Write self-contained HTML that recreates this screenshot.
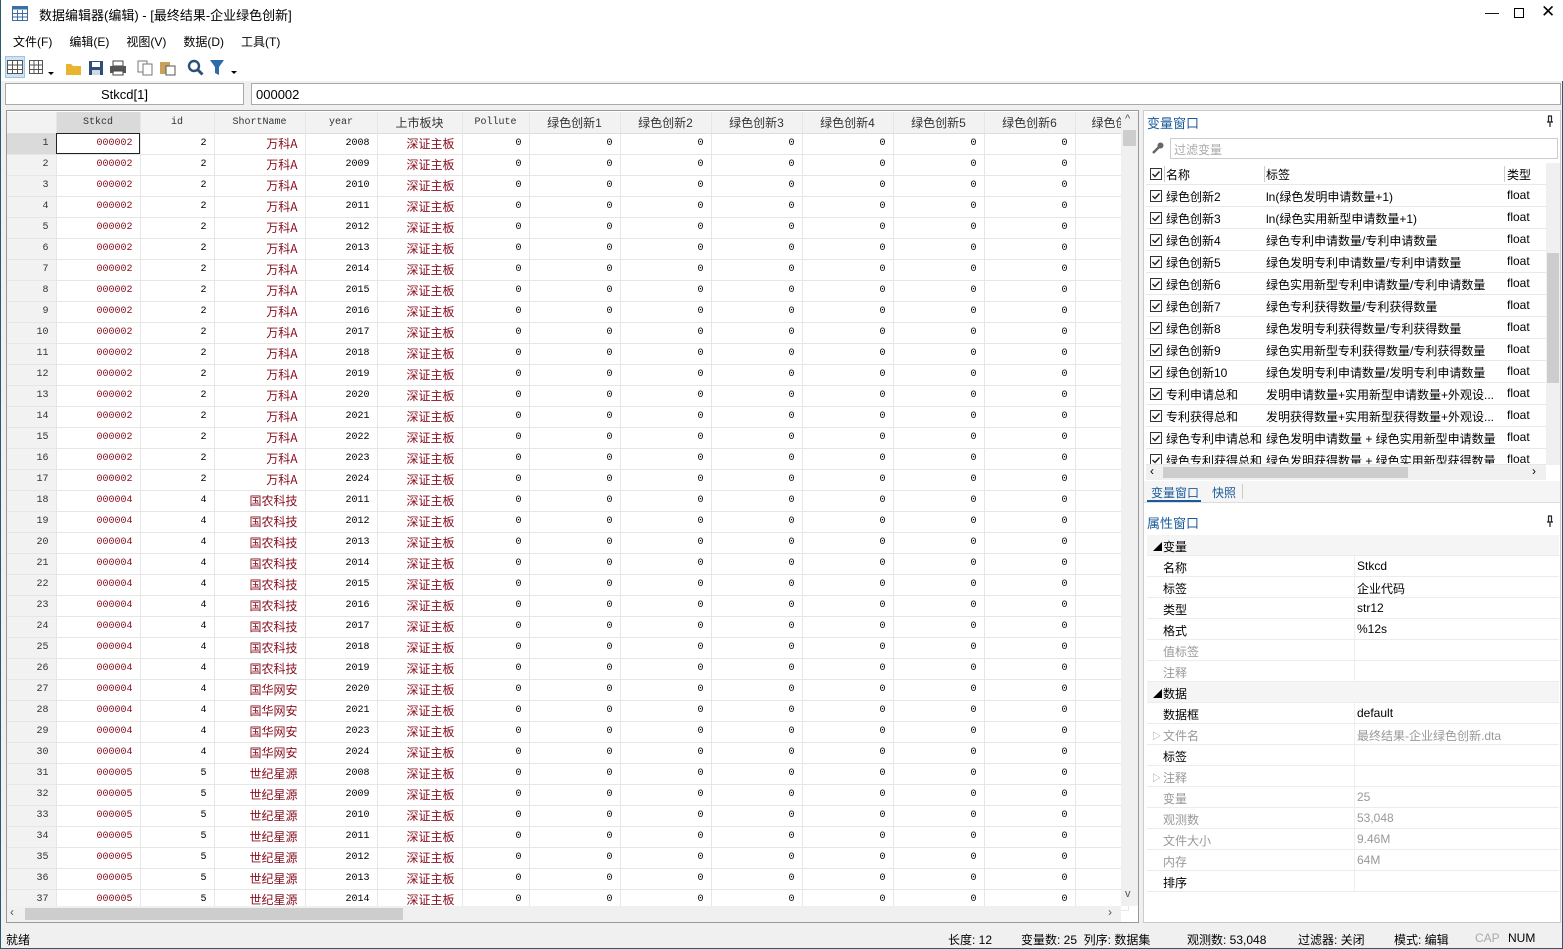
<!DOCTYPE html>
<html><head><meta charset="utf-8"><style>
*{box-sizing:border-box;margin:0;padding:0}
body{width:1563px;height:949px;position:relative;overflow:hidden;background:#f0f0f0;font-family:"Liberation Sans","Noto Sans CJK SC",sans-serif;font-size:12px;color:#000;border-left:1px solid #2b5a6e;border-right:1px solid #2b5a6e;border-bottom:1px solid #2b5a6e}
.a{position:absolute;white-space:nowrap}
#title{left:0;top:0;width:1563px;height:28px;background:#fff}
#menu{left:0;top:28px;width:1563px;height:26px;background:#fff}
#menu span{margin-right:17px}
#tb{left:0;top:54px;width:1563px;height:27px;background:#fff}
.grid{position:absolute;left:6px;top:112px;border-collapse:collapse;table-layout:fixed;background:#fff;font-family:"Liberation Mono","Noto Sans CJK SC",monospace;font-size:10px}
.grid td,.grid th{height:21px;border-right:1px solid #e6e6e6;border-bottom:1px solid #e6e6e6;text-align:right;padding-right:7px;overflow:hidden;white-space:nowrap;font-weight:normal;vertical-align:middle}
.grid th{background:#f2f2f2;color:#333}
.grid tr.h th{text-align:center;padding:0;background:#f2f2f2;border-bottom:1px solid #ddd;font-size:10px}
.grid tr.h th.cj{font-family:"Liberation Sans","Noto Sans CJK SC",sans-serif;font-size:12px}
.grid tr.h th.sel{background:#dadada}
.grid .s{color:#8a1020}
.grid .c{color:#8a1020;font-family:"Noto Sans CJK SC",sans-serif;font-size:12px}
.grid td.b{outline:1px solid #222;outline-offset:-1px}
.rp{font-size:12px}
.vr{position:absolute;left:1145px;width:400px;height:22px;border-bottom:1px solid #e8e8e8;background:#fff}
.vr span{position:absolute;top:3px}
.vr svg{position:absolute;left:4px;top:5px}
.pr{position:absolute;left:1146px;width:412px;height:21px;border-bottom:1px solid #ececec;background:#fff}
.pr span{position:absolute;top:3px}
.pr .k{left:16px}.pr .v{left:210px}
.g{color:#999}
</style></head><body>
<svg width="0" height="0" style="position:absolute"><defs><symbol id="ck" viewBox="0 0 12 12"><rect x=".5" y=".5" width="11" height="11" fill="#fff" stroke="#333"/><path d="M2.5 6l2.5 2.5 4.5-5" fill="none" stroke="#222" stroke-width="1.4"/></symbol><symbol id="pin" viewBox="0 0 8 12"><path d="M2 1h4M2.5 1v6M5.5 1v6M1 7h6M4 7v5" stroke="#222" stroke-width="1.2" fill="none"/></symbol></defs></svg>
<div class="a" id="title">
<svg class="a" style="left:11px;top:6px" width="16" height="15"><rect x=".5" y=".5" width="15" height="14" fill="#fff" stroke="#3a6ea5"/><rect x=".5" y=".5" width="15" height="3" fill="#3a6ea5"/><path d="M5.5 4v10M10.5 4v10M1 7.5h14M1 11h14" stroke="#3a6ea5"/></svg>
<span class="a" style="left:38px;top:5px;font-size:13px">数据编辑器(编辑) - [最终结果-企业绿色创新]</span>
<span class="a" style="left:1484px;top:4px;font-size:14px">—</span>
<svg class="a" style="left:1513px;top:8px" width="10" height="10"><rect x=".5" y=".5" width="9" height="9" fill="none" stroke="#000"/></svg>
<span class="a" style="left:1540px;top:2px;font-size:17px">✕</span>
</div>
<div class="a" id="menu"><div class="a" style="left:12px;top:5px"><span>文件(F)</span><span>编辑(E)</span><span>视图(V)</span><span>数据(D)</span><span>工具(T)</span></div></div>
<div class="a" id="tb">
<div class="a" style="left:4px;top:2px;width:20px;height:22px;background:#cfe3f5;border:1px solid #9ec3e6"></div>
<svg class="a" style="left:6px;top:6px" width="16" height="14"><rect x=".5" y=".5" width="15" height="13" fill="#fff" stroke="#555"/><path d="M5.5 1v13M10.5 1v13M1 5h15M1 9.5h15" stroke="#555"/></svg>
<svg class="a" style="left:28px;top:6px" width="26" height="16"><rect x=".5" y=".5" width="13" height="13" fill="#fff" stroke="#555"/><path d="M5 1v13M9.5 1v13M1 5h13M1 9.5h13" stroke="#555"/><path d="M19 12l3 3 3-3z" fill="#000"/></svg>
<svg class="a" style="left:64px;top:7px" width="17" height="14"><path d="M1 3h5l2 2h8v9H1z" fill="#e8b530"/></svg>
<svg class="a" style="left:87px;top:6px" width="16" height="16"><rect x="1" y="1" width="14" height="14" fill="#2d4f7a"/><rect x="4" y="2" width="8" height="5" fill="#fff"/><rect x="4" y="10" width="8" height="5" fill="#cfd9e6"/></svg>
<svg class="a" style="left:108px;top:6px" width="18" height="16"><rect x="4" y="1" width="10" height="5" fill="#fff" stroke="#444"/><rect x="1" y="6" width="16" height="7" fill="#555"/><rect x="4" y="11" width="10" height="4" fill="#fff" stroke="#444"/></svg>
<svg class="a" style="left:136px;top:6px" width="17" height="16"><rect x="1" y="1" width="9" height="11" fill="#fff" stroke="#777"/><rect x="6" y="4" width="9" height="11" fill="#fff" stroke="#777"/></svg>
<svg class="a" style="left:158px;top:5px" width="18" height="17"><rect x="1" y="3" width="10" height="12" fill="#c9a15b"/><rect x="7" y="7" width="9" height="9" fill="#fff" stroke="#555"/></svg>
<svg class="a" style="left:186px;top:5px" width="18" height="18"><circle cx="7" cy="7" r="5" fill="none" stroke="#2d4f7a" stroke-width="2.4"/><path d="M10.5 10.5l5 5" stroke="#2d4f7a" stroke-width="3"/></svg>
<svg class="a" style="left:208px;top:5px" width="32" height="18"><path d="M1 1h14l-5 7v8l-4-2V8z" fill="#2d6aa8"/><path d="M22 12l3 3 3-3z" fill="#000"/></svg>
</div>
<div class="a" style="left:4px;top:83px;width:239px;height:22px;background:#fff;border:1px solid #aaa;text-align:center;padding-top:3px;font-size:13px">Stkcd[1]</div>
<div class="a" style="left:250px;top:83px;width:1310px;height:22px;background:#fff;border:1px solid #aaa;padding:3px 4px;font-size:13px">000002</div>
<div class="a" style="left:5px;top:110px;width:1133px;height:813px;border:1px solid #999;background:#fff"></div>
<table class="grid">
<colgroup><col style="width:49px"><col style="width:84px"><col style="width:74px"><col style="width:91px"><col style="width:72px"><col style="width:85px"><col style="width:67px"><col style="width:91px"><col style="width:91px"><col style="width:91px"><col style="width:91px"><col style="width:91px"><col style="width:91px"><col style="width:46px"></colgroup>
<tr class="h"><th></th><th class="sel">Stkcd</th><th>id</th><th>ShortName</th><th>year</th><th class="cj">上市板块</th><th>Pollute</th><th class="cj">绿色创新1</th><th class="cj">绿色创新2</th><th class="cj">绿色创新3</th><th class="cj">绿色创新4</th><th class="cj">绿色创新5</th><th class="cj">绿色创新6</th><th class="cj" style="text-align:left;padding-left:16px">绿色创</th></tr>
<tr><th style="background:#dadada">1</th><td class="s b">000002</td><td>2</td><td class="c">万科A</td><td>2008</td><td class="c">深证主板</td><td>0</td><td>0</td><td>0</td><td>0</td><td>0</td><td>0</td><td>0</td><td></td></tr>
<tr><th>2</th><td class="s">000002</td><td>2</td><td class="c">万科A</td><td>2009</td><td class="c">深证主板</td><td>0</td><td>0</td><td>0</td><td>0</td><td>0</td><td>0</td><td>0</td><td></td></tr>
<tr><th>3</th><td class="s">000002</td><td>2</td><td class="c">万科A</td><td>2010</td><td class="c">深证主板</td><td>0</td><td>0</td><td>0</td><td>0</td><td>0</td><td>0</td><td>0</td><td></td></tr>
<tr><th>4</th><td class="s">000002</td><td>2</td><td class="c">万科A</td><td>2011</td><td class="c">深证主板</td><td>0</td><td>0</td><td>0</td><td>0</td><td>0</td><td>0</td><td>0</td><td></td></tr>
<tr><th>5</th><td class="s">000002</td><td>2</td><td class="c">万科A</td><td>2012</td><td class="c">深证主板</td><td>0</td><td>0</td><td>0</td><td>0</td><td>0</td><td>0</td><td>0</td><td></td></tr>
<tr><th>6</th><td class="s">000002</td><td>2</td><td class="c">万科A</td><td>2013</td><td class="c">深证主板</td><td>0</td><td>0</td><td>0</td><td>0</td><td>0</td><td>0</td><td>0</td><td></td></tr>
<tr><th>7</th><td class="s">000002</td><td>2</td><td class="c">万科A</td><td>2014</td><td class="c">深证主板</td><td>0</td><td>0</td><td>0</td><td>0</td><td>0</td><td>0</td><td>0</td><td></td></tr>
<tr><th>8</th><td class="s">000002</td><td>2</td><td class="c">万科A</td><td>2015</td><td class="c">深证主板</td><td>0</td><td>0</td><td>0</td><td>0</td><td>0</td><td>0</td><td>0</td><td></td></tr>
<tr><th>9</th><td class="s">000002</td><td>2</td><td class="c">万科A</td><td>2016</td><td class="c">深证主板</td><td>0</td><td>0</td><td>0</td><td>0</td><td>0</td><td>0</td><td>0</td><td></td></tr>
<tr><th>10</th><td class="s">000002</td><td>2</td><td class="c">万科A</td><td>2017</td><td class="c">深证主板</td><td>0</td><td>0</td><td>0</td><td>0</td><td>0</td><td>0</td><td>0</td><td></td></tr>
<tr><th>11</th><td class="s">000002</td><td>2</td><td class="c">万科A</td><td>2018</td><td class="c">深证主板</td><td>0</td><td>0</td><td>0</td><td>0</td><td>0</td><td>0</td><td>0</td><td></td></tr>
<tr><th>12</th><td class="s">000002</td><td>2</td><td class="c">万科A</td><td>2019</td><td class="c">深证主板</td><td>0</td><td>0</td><td>0</td><td>0</td><td>0</td><td>0</td><td>0</td><td></td></tr>
<tr><th>13</th><td class="s">000002</td><td>2</td><td class="c">万科A</td><td>2020</td><td class="c">深证主板</td><td>0</td><td>0</td><td>0</td><td>0</td><td>0</td><td>0</td><td>0</td><td></td></tr>
<tr><th>14</th><td class="s">000002</td><td>2</td><td class="c">万科A</td><td>2021</td><td class="c">深证主板</td><td>0</td><td>0</td><td>0</td><td>0</td><td>0</td><td>0</td><td>0</td><td></td></tr>
<tr><th>15</th><td class="s">000002</td><td>2</td><td class="c">万科A</td><td>2022</td><td class="c">深证主板</td><td>0</td><td>0</td><td>0</td><td>0</td><td>0</td><td>0</td><td>0</td><td></td></tr>
<tr><th>16</th><td class="s">000002</td><td>2</td><td class="c">万科A</td><td>2023</td><td class="c">深证主板</td><td>0</td><td>0</td><td>0</td><td>0</td><td>0</td><td>0</td><td>0</td><td></td></tr>
<tr><th>17</th><td class="s">000002</td><td>2</td><td class="c">万科A</td><td>2024</td><td class="c">深证主板</td><td>0</td><td>0</td><td>0</td><td>0</td><td>0</td><td>0</td><td>0</td><td></td></tr>
<tr><th>18</th><td class="s">000004</td><td>4</td><td class="c">国农科技</td><td>2011</td><td class="c">深证主板</td><td>0</td><td>0</td><td>0</td><td>0</td><td>0</td><td>0</td><td>0</td><td></td></tr>
<tr><th>19</th><td class="s">000004</td><td>4</td><td class="c">国农科技</td><td>2012</td><td class="c">深证主板</td><td>0</td><td>0</td><td>0</td><td>0</td><td>0</td><td>0</td><td>0</td><td></td></tr>
<tr><th>20</th><td class="s">000004</td><td>4</td><td class="c">国农科技</td><td>2013</td><td class="c">深证主板</td><td>0</td><td>0</td><td>0</td><td>0</td><td>0</td><td>0</td><td>0</td><td></td></tr>
<tr><th>21</th><td class="s">000004</td><td>4</td><td class="c">国农科技</td><td>2014</td><td class="c">深证主板</td><td>0</td><td>0</td><td>0</td><td>0</td><td>0</td><td>0</td><td>0</td><td></td></tr>
<tr><th>22</th><td class="s">000004</td><td>4</td><td class="c">国农科技</td><td>2015</td><td class="c">深证主板</td><td>0</td><td>0</td><td>0</td><td>0</td><td>0</td><td>0</td><td>0</td><td></td></tr>
<tr><th>23</th><td class="s">000004</td><td>4</td><td class="c">国农科技</td><td>2016</td><td class="c">深证主板</td><td>0</td><td>0</td><td>0</td><td>0</td><td>0</td><td>0</td><td>0</td><td></td></tr>
<tr><th>24</th><td class="s">000004</td><td>4</td><td class="c">国农科技</td><td>2017</td><td class="c">深证主板</td><td>0</td><td>0</td><td>0</td><td>0</td><td>0</td><td>0</td><td>0</td><td></td></tr>
<tr><th>25</th><td class="s">000004</td><td>4</td><td class="c">国农科技</td><td>2018</td><td class="c">深证主板</td><td>0</td><td>0</td><td>0</td><td>0</td><td>0</td><td>0</td><td>0</td><td></td></tr>
<tr><th>26</th><td class="s">000004</td><td>4</td><td class="c">国农科技</td><td>2019</td><td class="c">深证主板</td><td>0</td><td>0</td><td>0</td><td>0</td><td>0</td><td>0</td><td>0</td><td></td></tr>
<tr><th>27</th><td class="s">000004</td><td>4</td><td class="c">国华网安</td><td>2020</td><td class="c">深证主板</td><td>0</td><td>0</td><td>0</td><td>0</td><td>0</td><td>0</td><td>0</td><td></td></tr>
<tr><th>28</th><td class="s">000004</td><td>4</td><td class="c">国华网安</td><td>2021</td><td class="c">深证主板</td><td>0</td><td>0</td><td>0</td><td>0</td><td>0</td><td>0</td><td>0</td><td></td></tr>
<tr><th>29</th><td class="s">000004</td><td>4</td><td class="c">国华网安</td><td>2023</td><td class="c">深证主板</td><td>0</td><td>0</td><td>0</td><td>0</td><td>0</td><td>0</td><td>0</td><td></td></tr>
<tr><th>30</th><td class="s">000004</td><td>4</td><td class="c">国华网安</td><td>2024</td><td class="c">深证主板</td><td>0</td><td>0</td><td>0</td><td>0</td><td>0</td><td>0</td><td>0</td><td></td></tr>
<tr><th>31</th><td class="s">000005</td><td>5</td><td class="c">世纪星源</td><td>2008</td><td class="c">深证主板</td><td>0</td><td>0</td><td>0</td><td>0</td><td>0</td><td>0</td><td>0</td><td></td></tr>
<tr><th>32</th><td class="s">000005</td><td>5</td><td class="c">世纪星源</td><td>2009</td><td class="c">深证主板</td><td>0</td><td>0</td><td>0</td><td>0</td><td>0</td><td>0</td><td>0</td><td></td></tr>
<tr><th>33</th><td class="s">000005</td><td>5</td><td class="c">世纪星源</td><td>2010</td><td class="c">深证主板</td><td>0</td><td>0</td><td>0</td><td>0</td><td>0</td><td>0</td><td>0</td><td></td></tr>
<tr><th>34</th><td class="s">000005</td><td>5</td><td class="c">世纪星源</td><td>2011</td><td class="c">深证主板</td><td>0</td><td>0</td><td>0</td><td>0</td><td>0</td><td>0</td><td>0</td><td></td></tr>
<tr><th>35</th><td class="s">000005</td><td>5</td><td class="c">世纪星源</td><td>2012</td><td class="c">深证主板</td><td>0</td><td>0</td><td>0</td><td>0</td><td>0</td><td>0</td><td>0</td><td></td></tr>
<tr><th>36</th><td class="s">000005</td><td>5</td><td class="c">世纪星源</td><td>2013</td><td class="c">深证主板</td><td>0</td><td>0</td><td>0</td><td>0</td><td>0</td><td>0</td><td>0</td><td></td></tr>
<tr><th style="height:17px">37</th><td class="s">000005</td><td>5</td><td class="c">世纪星源</td><td>2014</td><td class="c">深证主板</td><td>0</td><td>0</td><td>0</td><td>0</td><td>0</td><td>0</td><td>0</td><td></td></tr>
</table>
<div class="a" style="left:6px;top:906px;width:1114px;height:16px;background:#f0f0f0"></div>
<div class="a" style="left:24px;top:908px;width:378px;height:12px;background:#cdcdcd"></div>
<span class="a" style="left:9px;top:905px;font-size:12px;color:#555">‹</span>
<span class="a" style="left:1107px;top:905px;font-size:12px;color:#555">›</span>
<div class="a" style="left:1120px;top:112px;width:17px;height:794px;background:#f0f0f0"></div>
<div class="a" style="left:1122px;top:130px;width:13px;height:16px;background:#cdcdcd"></div>
<span class="a" style="left:1124px;top:113px;font-size:11px;color:#555">^</span>
<span class="a" style="left:1124px;top:888px;font-size:11px;color:#555">v</span>
<div class="a" style="left:1142px;top:110px;width:418px;height:813px;background:#fff;border:1px solid #ccc"></div>
<span class="a rp" style="left:1146px;top:113px;font-size:13px;color:#1a5a9a">变量窗口</span>
<svg class="a" style="left:1545px;top:115px" width="8" height="12"><use href="#pin"/></svg>
<svg class="a" style="left:1150px;top:141px" width="14" height="14"><path d="M2 12l6-6" stroke="#666" stroke-width="2.5"/><circle cx="9.5" cy="4.5" r="3" fill="#666"/></svg>
<div class="a" style="left:1169px;top:138px;width:388px;height:21px;border:1px solid #ccc;background:#fff;color:#aaa;padding:2px 3px">过滤变量</div>
<div class="vr" style="top:163px"><svg width="12" height="12"><use href="#ck"/></svg><span style="left:20px">名称</span><span style="left:120px">标签</span><span style="left:361px">类型</span></div>
<div class="a" style="left:1163px;top:166px;width:1px;height:16px;background:#ccc"></div>
<div class="a" style="left:1263px;top:166px;width:1px;height:16px;background:#ccc"></div>
<div class="a" style="left:1503px;top:166px;width:1px;height:16px;background:#ccc"></div>
<div class="vr" style="top:185px"><svg width="12" height="12"><use href="#ck"/></svg><span style="left:20px">绿色创新2</span><span style="left:120px">ln(绿色发明申请数量+1)</span><span style="left:361px">float</span></div>
<div class="vr" style="top:207px"><svg width="12" height="12"><use href="#ck"/></svg><span style="left:20px">绿色创新3</span><span style="left:120px">ln(绿色实用新型申请数量+1)</span><span style="left:361px">float</span></div>
<div class="vr" style="top:229px"><svg width="12" height="12"><use href="#ck"/></svg><span style="left:20px">绿色创新4</span><span style="left:120px">绿色专利申请数量/专利申请数量</span><span style="left:361px">float</span></div>
<div class="vr" style="top:251px"><svg width="12" height="12"><use href="#ck"/></svg><span style="left:20px">绿色创新5</span><span style="left:120px">绿色发明专利申请数量/专利申请数量</span><span style="left:361px">float</span></div>
<div class="vr" style="top:273px"><svg width="12" height="12"><use href="#ck"/></svg><span style="left:20px">绿色创新6</span><span style="left:120px">绿色实用新型专利申请数量/专利申请数量</span><span style="left:361px">float</span></div>
<div class="vr" style="top:295px"><svg width="12" height="12"><use href="#ck"/></svg><span style="left:20px">绿色创新7</span><span style="left:120px">绿色专利获得数量/专利获得数量</span><span style="left:361px">float</span></div>
<div class="vr" style="top:317px"><svg width="12" height="12"><use href="#ck"/></svg><span style="left:20px">绿色创新8</span><span style="left:120px">绿色发明专利获得数量/专利获得数量</span><span style="left:361px">float</span></div>
<div class="vr" style="top:339px"><svg width="12" height="12"><use href="#ck"/></svg><span style="left:20px">绿色创新9</span><span style="left:120px">绿色实用新型专利获得数量/专利获得数量</span><span style="left:361px">float</span></div>
<div class="vr" style="top:361px"><svg width="12" height="12"><use href="#ck"/></svg><span style="left:20px">绿色创新10</span><span style="left:120px">绿色发明专利申请数量/发明专利申请数量</span><span style="left:361px">float</span></div>
<div class="vr" style="top:383px"><svg width="12" height="12"><use href="#ck"/></svg><span style="left:20px">专利申请总和</span><span style="left:120px">发明申请数量+实用新型申请数量+外观设...</span><span style="left:361px">float</span></div>
<div class="vr" style="top:405px"><svg width="12" height="12"><use href="#ck"/></svg><span style="left:20px">专利获得总和</span><span style="left:120px">发明获得数量+实用新型获得数量+外观设...</span><span style="left:361px">float</span></div>
<div class="vr" style="top:427px"><svg width="12" height="12"><use href="#ck"/></svg><span style="left:20px">绿色专利申请总和</span><span style="left:120px">绿色发明申请数量 + 绿色实用新型申请数量</span><span style="left:361px">float</span></div>
<div class="vr" style="top:449px;height:16px;overflow:hidden"><svg width="12" height="12"><use href="#ck"/></svg><span style="left:20px">绿色专利获得总和</span><span style="left:120px">绿色发明获得数量 + 绿色实用新型获得数量</span><span style="left:361px">float</span></div>
<div class="a" style="left:1545px;top:163px;width:14px;height:302px;background:#f0f0f0"></div>
<div class="a" style="left:1546px;top:253px;width:12px;height:130px;background:#cdcdcd"></div>
<div class="a" style="left:1145px;top:465px;width:400px;height:15px;background:#f0f0f0"></div>
<div class="a" style="left:1162px;top:467px;width:245px;height:11px;background:#cdcdcd"></div>
<span class="a" style="left:1149px;top:464px;font-size:12px">‹</span>
<span class="a" style="left:1531px;top:464px;font-size:12px">›</span>
<div class="a" style="left:1143px;top:481px;width:416px;height:22px;background:#f5f5f5;border-bottom:1px solid #ddd"></div>
<span class="a" style="left:1150px;top:484px;color:#1a5a9a">变量窗口</span>
<div class="a" style="left:1146px;top:500px;width:54px;height:2px;background:#1a5a9a"></div>
<span class="a" style="left:1211px;top:484px;color:#1a5a9a">快照</span>
<div class="a" style="left:1241px;top:484px;width:1px;height:15px;background:#ccc"></div>
<span class="a" style="left:1146px;top:513px;font-size:13px;color:#1a5a9a">属性窗口</span>
<svg class="a" style="left:1545px;top:515px" width="8" height="12"><use href="#pin"/></svg>
<div class="pr" style="top:535px;background:#f5f5f5"><span style="left:6px;font-size:9px;top:5px">◢</span><span class="k">变量</span></div>
<div class="pr" style="top:556px"><span class="k">名称</span><span class="v">Stkcd</span></div>
<div class="pr" style="top:577px"><span class="k">标签</span><span class="v">企业代码</span></div>
<div class="pr" style="top:598px"><span class="k">类型</span><span class="v">str12</span></div>
<div class="pr" style="top:619px"><span class="k">格式</span><span class="v">%12s</span></div>
<div class="pr" style="top:640px"><span class="k g">值标签</span></div>
<div class="pr" style="top:661px"><span class="k g">注释</span></div>
<div class="pr" style="top:682px;background:#f5f5f5"><span style="left:6px;font-size:9px;top:5px">◢</span><span class="k">数据</span></div>
<div class="pr" style="top:703px"><span class="k">数据框</span><span class="v">default</span></div>
<div class="pr" style="top:724px"><span class="g" style="left:5px;font-size:9px;top:5px">▷</span><span class="k g">文件名</span><span class="v g">最终结果-企业绿色创新.dta</span></div>
<div class="pr" style="top:745px"><span class="k">标签</span></div>
<div class="pr" style="top:766px"><span class="g" style="left:5px;font-size:9px;top:5px">▷</span><span class="k g">注释</span></div>
<div class="pr" style="top:787px"><span class="k g">变量</span><span class="v g">25</span></div>
<div class="pr" style="top:808px"><span class="k g">观测数</span><span class="v g">53,048</span></div>
<div class="pr" style="top:829px"><span class="k g">文件大小</span><span class="v g">9.46M</span></div>
<div class="pr" style="top:850px"><span class="k g">内存</span><span class="v g">64M</span></div>
<div class="pr" style="top:871px"><span class="k">排序</span></div>
<div class="a" style="left:1353px;top:556px;width:1px;height:126px;background:#eee"></div>
<div class="a" style="left:1353px;top:703px;width:1px;height:189px;background:#eee"></div>
<span class="a" style="left:5px;top:931px">就绪</span>
<span class="a" style="left:947px;top:931px">长度: 12</span>
<span class="a" style="left:1020px;top:931px">变量数: 25&nbsp; 列序: 数据集</span>
<span class="a" style="left:1186px;top:931px">观测数: 53,048</span>
<span class="a" style="left:1297px;top:931px">过滤器: 关闭</span>
<span class="a" style="left:1393px;top:931px">模式: 编辑</span>
<span class="a" style="left:1474px;top:931px;color:#aaa">CAP</span>
<span class="a" style="left:1507px;top:931px">NUM</span>
</body></html>
